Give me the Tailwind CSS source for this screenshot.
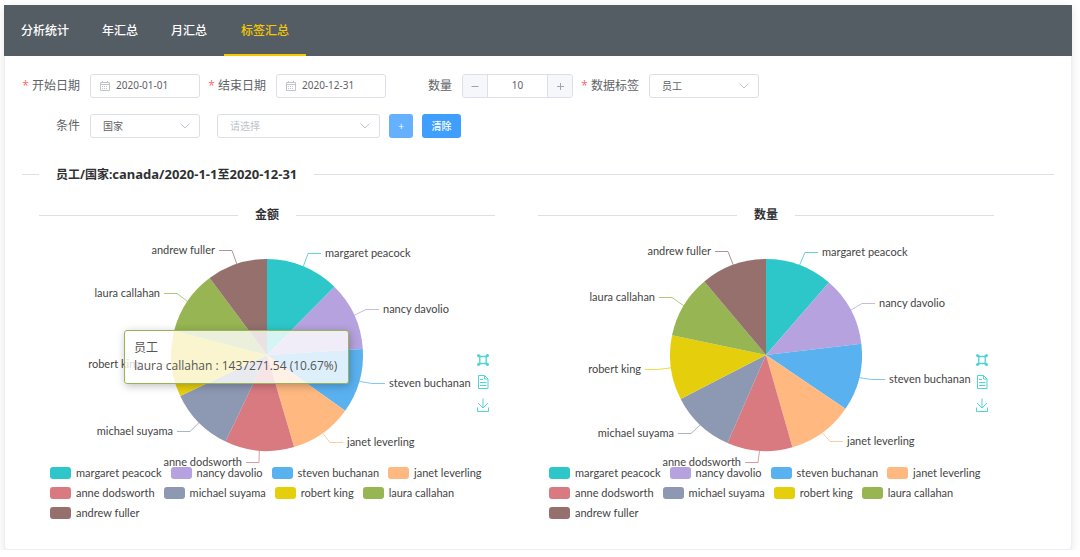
<!DOCTYPE html>
<html lang="zh-CN">
<head>
<meta charset="utf-8">
<meta name="viewport" content="width=device-width, initial-scale=1">
<title>标签汇总</title>
<script src="https://cdn.jsdelivr.net/npm/@tailwindcss/browser@4"></script>
</head>
<body class="bg-white font-['Open_Sans','Noto_Sans_CJK_SC',sans-serif] text-xs text-[#606266]">
<main class="mx-1 mt-[5px] mr-2 rounded-b-sm border border-t-0 border-[#ebeef5] bg-white pb-[26px] shadow-[0_2px_10px_rgba(0,0,0,0.1)]">
  <nav class="-mx-px flex h-[51px] gap-px bg-[#545c64] pl-px font-medium text-white">
    <a href="#stat" class="flex items-center border-b-2 border-transparent px-4 pt-[3px]">分析统计</a>
    <a href="#year" class="flex items-center border-b-2 border-transparent px-4 pt-[3px]">年汇总</a>
    <a href="#month" class="flex items-center border-b-2 border-transparent px-4 pt-[3px]">月汇总</a>
    <a href="#tag" class="flex items-center border-b-2 border-[#f5c800] px-[17px] pt-[3px] text-[#f5c800]">标签汇总</a>
  </nav>

  <form class="px-[9px] pt-[18px]">
    <div class="flex flex-wrap gap-y-4">
      <div class="flex items-center">
        <label for="start" class="w-[76px] pr-[10px] text-right"><span class="text-[#f56c6c]">*</span> 开始日期</label>
        <div class="flex h-6 w-[110px] items-center gap-[6px] rounded-[3px] border border-[#dcdfe6] px-[9px]">
          <svg class="h-[11px] w-[10px] shrink-0" viewBox="0 0 10 11" fill="none" stroke="#c0c4cc"><path d="M.5 1.5h9v8h-9zM.5 3.5h9M2.5 0v2M7.500 0v2"/><path stroke-dasharray="1 1" d="M2 5.500h6M2 7.500h6"/></svg>
          <input id="start" type="text" value="2020-01-01" class="w-full min-w-0 font-['Noto_Sans',sans-serif] text-[10px] outline-none">
        </div>
      </div>
      <div class="flex items-center">
        <label for="end" class="w-[76px] pr-[10px] text-right"><span class="text-[#f56c6c]">*</span> 结束日期</label>
        <div class="flex h-6 w-[110px] items-center gap-[6px] rounded-[3px] border border-[#dcdfe6] px-[9px]">
          <svg class="h-[11px] w-[10px] shrink-0" viewBox="0 0 10 11" fill="none" stroke="#c0c4cc"><path d="M.5 1.5h9v8h-9zM.5 3.5h9M2.5 0v2M7.500 0v2"/><path stroke-dasharray="1 1" d="M2 5.500h6M2 7.500h6"/></svg>
          <input id="end" type="text" value="2020-12-31" class="w-full min-w-0 font-['Noto_Sans',sans-serif] text-[10px] outline-none">
        </div>
      </div>
      <div class="flex items-center">
        <label for="count" class="w-[76px] pr-[10px] text-right">数量</label>
        <div class="flex h-6 w-[111px] overflow-hidden rounded-[3px] border border-[#dcdfe6]">
          <button type="button" aria-label="减少" class="grid w-[25px] shrink-0 place-items-center border-r border-[#dcdfe6] bg-[#f5f7fa]"><svg class="size-2" viewBox="0 0 8 8" stroke="#a0a3a9"><path d="M.5 4.500h7"/></svg></button>
          <input id="count" type="text" value="10" class="w-full min-w-0 text-center font-['Noto_Sans',sans-serif] text-[10px] outline-none">
          <button type="button" aria-label="增加" class="grid w-[25px] shrink-0 place-items-center border-l border-[#dcdfe6] bg-[#f5f7fa]"><svg class="size-2" viewBox="0 0 8 8" stroke="#a0a3a9"><path d="M1 4.500h7M4.500 1v7"/></svg></button>
        </div>
      </div>
      <div class="flex items-center">
        <label for="tag" class="w-[76px] pr-[10px] text-right"><span class="text-[#f56c6c]">*</span> 数据标签</label>
        <div class="relative w-[110px]">
          <select id="tag" class="block h-6 w-full appearance-none rounded-[3px] border border-[#dcdfe6] bg-white px-3 pt-px text-[10px]"><option>员工</option></select>
          <svg class="pointer-events-none absolute top-[9px] right-[10px] h-[6px] w-[10px]" viewBox="0 0 10 6" fill="none" stroke="#c0c4cc"><path d="M.5.5 5 5 9.500.5"/></svg>
        </div>
      </div>
    </div>
    <div class="mt-4 flex items-center">
      <label for="field" class="w-[76px] pr-[10px] text-right">条件</label>
      <div class="relative w-[110px]">
        <select id="field" class="block h-6 w-full appearance-none rounded-[3px] border border-[#dcdfe6] bg-white px-3 pt-px text-[10px]"><option>国家</option></select>
        <svg class="pointer-events-none absolute top-[9px] right-[10px] h-[6px] w-[10px]" viewBox="0 0 10 6" fill="none" stroke="#c0c4cc"><path d="M.5.5 5 5 9.500.5"/></svg>
      </div>
      <div class="relative ml-[17px] w-[163px]">
        <select aria-label="条件值" class="block h-6 w-full appearance-none rounded-[3px] border border-[#dcdfe6] bg-white px-3 pt-px text-[10px] text-[#c0c4cc]"><option>请选择</option></select>
        <svg class="pointer-events-none absolute top-[9px] right-[10px] h-[6px] w-[10px]" viewBox="0 0 10 6" fill="none" stroke="#c0c4cc"><path d="M.5.5 5 5 9.500.5"/></svg>
      </div>
      <button type="button" class="ml-[9px] h-6 w-6 rounded-[3px] bg-[#66b1ff] text-[10px] leading-6 font-medium text-white">+</button>
      <button type="button" class="ml-[9px] h-6 w-[39px] rounded-[3px] bg-[#409eff] text-[10px] leading-6 font-medium text-white">清除</button>
    </div>
  </form>

  <h2 class="mx-[17px] mt-7 flex items-center gap-[17px] font-['Noto_Sans','Noto_Sans_CJK_SC',sans-serif] leading-4 font-bold text-[#303133]">
    <span class="h-px w-[17px] bg-[#dcdfe6]"></span><span>员工/国家:<span class="text-[13px]">canada/2020-1-1</span>至<span class="text-[13px]">2020-12-31</span></span><span class="h-px flex-1 bg-[#dcdfe6]"></span>
  </h2>

  <div class="mt-6 flex gap-[43px] pr-[77px] pl-[34px]">
    <section class="relative min-w-0 flex-1">
      <h3 class="flex items-center gap-[17px] leading-4 font-bold text-[#303133]"><span class="h-px flex-1 bg-[#dcdfe6]"></span>金额<span class="h-px flex-1 bg-[#dcdfe6]"></span></h3>
      <svg data-chart="amount" class="mt-3 block h-[228px] w-full overflow-visible fill-[#444] font-[Lato,sans-serif] text-[11px]" viewBox="0 0 456 228"></svg>
      <div data-tools class="absolute top-[147px] right-[6px] flex flex-col gap-[9px]"></div>
      <div data-legend class="ml-[11px] flex flex-wrap gap-x-[9px] font-[Lato,sans-serif] text-[11px] text-[#444]"></div>
      <div class="absolute top-[123px] left-[85px] rounded-[3px] border border-[#97b552] bg-white/80 py-[8px] pr-[11px] pl-[9px] leading-[18px] whitespace-nowrap text-[#555] shadow-[1px_2px_8px_rgba(0,0,0,0.25)]">员工<br>laura callahan : 1437271.54 (10.67%)</div>
    </section>
    <section class="relative min-w-0 flex-1">
      <h3 class="flex items-center gap-[17px] leading-4 font-bold text-[#303133]"><span class="h-px flex-1 bg-[#dcdfe6]"></span>数量<span class="h-px flex-1 bg-[#dcdfe6]"></span></h3>
      <svg data-chart="quantity" class="mt-3 block h-[228px] w-full overflow-visible fill-[#444] font-[Lato,sans-serif] text-[11px]" viewBox="0 0 456 228"></svg>
      <div data-tools class="absolute top-[147px] right-[6px] flex flex-col gap-[9px]"></div>
      <div data-legend class="ml-[11px] flex flex-wrap gap-x-[9px] font-[Lato,sans-serif] text-[11px] text-[#444]"></div>
    </section>
  </div>
</main>

<template id="tools">
  <button type="button" aria-label="缩放" class="block"><svg class="size-3" viewBox="0 0 12 12" fill="none" stroke="#4fd5d3" stroke-width="1.300"><path d="M2.800 1v10M9.200 1v10M1 2.500h10M1 9.500h10"/><g fill="#4fd5d3" stroke="none"><circle cx="1.500" cy="1.500" r="1.500"/><circle cx="10.500" cy="1.500" r="1.500"/><circle cx="1.500" cy="10.500" r="1.500"/><circle cx="10.500" cy="10.500" r="1.500"/></g></svg></button>
  <button type="button" aria-label="数据视图" class="block"><svg class="h-[14px] w-3" viewBox="0 0 12 14" fill="none" stroke="#4fd5d3"><path d="M1.500.5h6l3.500 3.500v9.500h-9.500zM7.500.5v3.500h3.500M3 4.500h3M3 7.500h6.500M3 10.500h6.500"/></svg></button>
  <button type="button" aria-label="保存为图片" class="block"><svg class="h-[14px] w-3" viewBox="0 0 12 14" fill="none" stroke="#4fd5d3"><path d="M6 .5v9.500M1 5l5 5 5-5M.5 9.500v4h11v-4"/></svg></button>
</template>

<script>
const names = ['margaret peacock', 'nancy davolio', 'steven buchanan', 'janet leverling', 'anne dodsworth', 'michael suyama', 'robert king', 'laura callahan', 'andrew fuller'];
const colors = ['#2ec7c9', '#b6a2de', '#5ab1ef', '#ffb980', '#d87a80', '#8d98b3', '#e5cf0d', '#97b552', '#95706d'];
// Slice boundaries in degrees clockwise from the top, and the elbow of each label line.
const charts = {
  amount: {
    angles: [0, 44.6, 86.4, 125.5, 163.6, 205.6, 244.7, 284.6, 323.3, 360],
    elbows: [[269, 19], [327, 75], [333, 149], [291, 208], [220, 228], [151, 197], [119, 130], [138, 59], [193, 16]]
  },
  quantity: {
    angles: [0, 41, 83.2, 124.1, 164, 203.7, 242.8, 281.8, 320, 360],
    elbows: [[267, 18], [324, 69], [334, 145], [292, 207], [220, 228], [153, 199], [120, 135], [134, 63], [190, 17]]
  }
};
const cx = 228, cy = 120, r = 96;
const at = deg => {
  const a = deg * Math.PI / 180;
  return (cx + r * Math.sin(a)).toFixed(2) + ' ' + (cy - r * Math.cos(a)).toFixed(2);
};
document.querySelectorAll('[data-chart]').forEach(svg => {
  const { angles, elbows } = charts[svg.dataset.chart];
  svg.innerHTML = names.map((name, i) => {
    const [x, y] = elbows[i], side = i < 4 ? 1 : -1;
    return `<path fill="${colors[i]}" d="M${cx} ${cy}L${at(angles[i])}A${r} ${r} 0 0 1 ${at(angles[i + 1])}Z"/>` +
      `<path fill="none" stroke="${colors[i]}" stroke-opacity=".75" d="M${at((angles[i] + angles[i + 1]) / 2)}L${x} ${y - .5}h${13 * side}"/>` +
      `<text x="${x + 17 * side}" y="${y + 3}" text-anchor="${side > 0 ? 'start' : 'end'}">${name}</text>`;
  }).join('');
});
document.querySelectorAll('[data-legend]').forEach(box => {
  box.innerHTML = names.map((name, i) =>
    `<button type="button" class="flex h-[20px] items-center gap-[5px]"><span class="h-3 w-[21px] rounded-[3px]" style="background:${colors[i]}"></span>${name}</button>`
  ).join('');
});
document.querySelectorAll('[data-tools]').forEach(box => box.append(document.getElementById('tools').content.cloneNode(true)));
</script>
</body>
</html>
